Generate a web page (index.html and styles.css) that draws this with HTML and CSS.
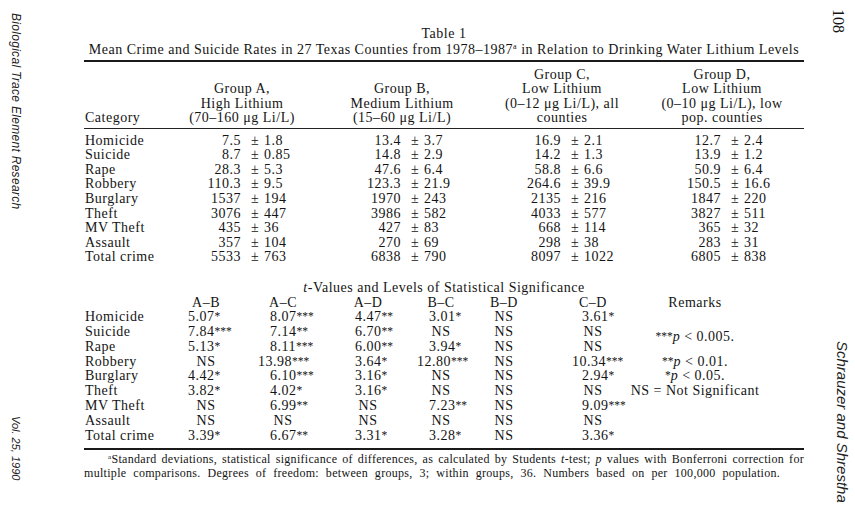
FILE: index.html
```html
<!DOCTYPE html>
<html lang="en">
<head>
<meta charset="utf-8">
<title>Table 1</title>
<link rel="stylesheet" href="styles.css">
</head>
<body>
<div class="page">
  <aside class="gutter-left">
    <div class="runhead">Biological Trace Element Research</div>
    <div class="vol">Vol. 25, 1990</div>
  </aside>

  <main class="main">
    <div class="tnum">Table 1</div>
    <div class="ttitle">Mean Crime and Suicide Rates in 27 Texas Counties from 1978–1987<sup class="fn">a</sup> in Relation to Drinking Water Lithium Levels</div>

    <div class="t1 t1-head">
      <div class="cat">Category</div>
      <div class="grp">Group A,<br>High Lithium<br>(70–160 μg Li/L)</div>
      <div class="grp">Group B,<br>Medium Lithium<br>(15–60 μg Li/L)</div>
      <div class="grp">Group C,<br>Low Lithium<br>(0–12 μg Li/L), all<br>counties</div>
      <div class="grp">Group D,<br>Low Lithium<br>(0–10 μg Li/L), low<br>pop. counties</div>
    </div>

    <div class="t1 t1-body">
      <div class="cat">Homicide</div>
      <div class="val"><span class="num">7.5</span><span class="pm">±</span><span class="sd">1.8</span></div>
      <div class="val"><span class="num">13.4</span><span class="pm">±</span><span class="sd">3.7</span></div>
      <div class="val"><span class="num">16.9</span><span class="pm">±</span><span class="sd">2.1</span></div>
      <div class="val"><span class="num">12.7</span><span class="pm">±</span><span class="sd">2.4</span></div>

      <div class="cat">Suicide</div>
      <div class="val"><span class="num">8.7</span><span class="pm">±</span><span class="sd">0.85</span></div>
      <div class="val"><span class="num">14.8</span><span class="pm">±</span><span class="sd">2.9</span></div>
      <div class="val"><span class="num">14.2</span><span class="pm">±</span><span class="sd">1.3</span></div>
      <div class="val"><span class="num">13.9</span><span class="pm">±</span><span class="sd">1.2</span></div>

      <div class="cat">Rape</div>
      <div class="val"><span class="num">28.3</span><span class="pm">±</span><span class="sd">5.3</span></div>
      <div class="val"><span class="num">47.6</span><span class="pm">±</span><span class="sd">6.4</span></div>
      <div class="val"><span class="num">58.8</span><span class="pm">±</span><span class="sd">6.6</span></div>
      <div class="val"><span class="num">50.9</span><span class="pm">±</span><span class="sd">6.4</span></div>

      <div class="cat">Robbery</div>
      <div class="val"><span class="num">110.3</span><span class="pm">±</span><span class="sd">9.5</span></div>
      <div class="val"><span class="num">123.3</span><span class="pm">±</span><span class="sd">21.9</span></div>
      <div class="val"><span class="num">264.6</span><span class="pm">±</span><span class="sd">39.9</span></div>
      <div class="val"><span class="num">150.5</span><span class="pm">±</span><span class="sd">16.6</span></div>

      <div class="cat">Burglary</div>
      <div class="val"><span class="num">1537</span><span class="pm">±</span><span class="sd">194</span></div>
      <div class="val"><span class="num">1970</span><span class="pm">±</span><span class="sd">243</span></div>
      <div class="val"><span class="num">2135</span><span class="pm">±</span><span class="sd">216</span></div>
      <div class="val"><span class="num">1847</span><span class="pm">±</span><span class="sd">220</span></div>

      <div class="cat">Theft</div>
      <div class="val"><span class="num">3076</span><span class="pm">±</span><span class="sd">447</span></div>
      <div class="val"><span class="num">3986</span><span class="pm">±</span><span class="sd">582</span></div>
      <div class="val"><span class="num">4033</span><span class="pm">±</span><span class="sd">577</span></div>
      <div class="val"><span class="num">3827</span><span class="pm">±</span><span class="sd">511</span></div>

      <div class="cat">MV Theft</div>
      <div class="val"><span class="num">435</span><span class="pm">±</span><span class="sd">36</span></div>
      <div class="val"><span class="num">427</span><span class="pm">±</span><span class="sd">83</span></div>
      <div class="val"><span class="num">668</span><span class="pm">±</span><span class="sd">114</span></div>
      <div class="val"><span class="num">365</span><span class="pm">±</span><span class="sd">32</span></div>

      <div class="cat">Assault</div>
      <div class="val"><span class="num">357</span><span class="pm">±</span><span class="sd">104</span></div>
      <div class="val"><span class="num">270</span><span class="pm">±</span><span class="sd">69</span></div>
      <div class="val"><span class="num">298</span><span class="pm">±</span><span class="sd">38</span></div>
      <div class="val"><span class="num">283</span><span class="pm">±</span><span class="sd">31</span></div>

      <div class="cat">Total crime</div>
      <div class="val"><span class="num">5533</span><span class="pm">±</span><span class="sd">763</span></div>
      <div class="val"><span class="num">6838</span><span class="pm">±</span><span class="sd">790</span></div>
      <div class="val"><span class="num">8097</span><span class="pm">±</span><span class="sd">1022</span></div>
      <div class="val"><span class="num">6805</span><span class="pm">±</span><span class="sd">838</span></div>
    </div>

    <div class="tcap"><i>t</i>-Values and Levels of Statistical Significance</div>

    <div class="tv">
      <div class="ab h">A–B</div><div class="ac h">A–C</div><div class="ad h">A–D</div><div class="bc h">B–C</div><div class="bd h">B–D</div><div class="cd h">C–D</div><div class="rm">Remarks</div>

      <div class="k">Homicide</div><div class="ab v">5.07<span class="st">*</span></div><div class="ac v">8.07<span class="st">***</span></div><div class="ad v">4.47<span class="st">**</span></div><div class="bc v">3.01<span class="st">*</span></div><div class="bd ns">NS</div><div class="cd v">3.61<span class="st">*</span></div>

      <div class="k">Suicide</div><div class="ab v">7.84<span class="st">***</span></div><div class="ac v">7.14<span class="st">**</span></div><div class="ad v">6.70<span class="st">**</span></div><div class="bc ns">NS</div><div class="bd ns">NS</div><div class="cd ns">NS</div><div class="rm drop"><span class="st">***</span><i>p</i> &lt; 0.005.</div>

      <div class="k">Rape</div><div class="ab v">5.13<span class="st">*</span></div><div class="ac v">8.11<span class="st">***</span></div><div class="ad v">6.00<span class="st">**</span></div><div class="bc v">3.94<span class="st">*</span></div><div class="bd ns">NS</div><div class="cd ns">NS</div>

      <div class="k">Robbery</div><div class="ab ns">NS</div><div class="ac v w">13.98<span class="st">***</span></div><div class="ad v">3.64<span class="st">*</span></div><div class="bc v w">12.80<span class="st">***</span></div><div class="bd ns">NS</div><div class="cd v w">10.34<span class="st">***</span></div><div class="rm"><span class="st">**</span><i>p</i> &lt; 0.01.</div>

      <div class="k">Burglary</div><div class="ab v">4.42<span class="st">*</span></div><div class="ac v">6.10<span class="st">***</span></div><div class="ad v">3.16<span class="st">*</span></div><div class="bc ns">NS</div><div class="bd ns">NS</div><div class="cd v">2.94<span class="st">*</span></div><div class="rm"><span class="st">*</span><i>p</i> &lt; 0.05.</div>

      <div class="k">Theft</div><div class="ab v">3.82<span class="st">*</span></div><div class="ac v">4.02<span class="st">*</span></div><div class="ad v">3.16<span class="st">*</span></div><div class="bc ns">NS</div><div class="bd ns">NS</div><div class="cd ns">NS</div><div class="rm">NS = Not Significant</div>

      <div class="k">MV Theft</div><div class="ab ns">NS</div><div class="ac v">6.99<span class="st">**</span></div><div class="ad ns">NS</div><div class="bc v">7.23<span class="st">**</span></div><div class="bd ns">NS</div><div class="cd v">9.09<span class="st">***</span></div>

      <div class="k">Assault</div><div class="ab ns">NS</div><div class="ac ns">NS</div><div class="ad ns">NS</div><div class="bc ns">NS</div><div class="bd ns">NS</div><div class="cd ns">NS</div>

      <div class="k">Total crime</div><div class="ab v">3.39<span class="st">*</span></div><div class="ac v">6.67<span class="st">**</span></div><div class="ad v">3.31<span class="st">*</span></div><div class="bc v">3.28<span class="st">*</span></div><div class="bd ns">NS</div><div class="cd v">3.36<span class="st">*</span></div>
    </div>

    <div class="foot">
      <div class="l1"><sup class="fna">a</sup>Standard deviations, statistical significance of differences, as calculated by Students <i>t</i>-test; <i>p</i> values with Bonferroni correction for</div>
      <div class="l2">multiple comparisons. Degrees of freedom: between groups, 3; within groups, 36. Numbers based on per 100,000 population.</div>
    </div>
  </main>

  <aside class="gutter-right">
    <div class="folio">108</div>
    <div class="authors">Schrauzer and Shrestha</div>
  </aside>
</div>
</body>
</html>
```

FILE: styles.css
```css
* { box-sizing: border-box; }

body {
  margin: 0;
  background: #ffffff;
  color: #141414;
  font-family: "Liberation Serif", "Times New Roman", serif;
}

.page {
  display: flex;
  width: 855px;
  height: 505px;
  overflow: hidden;
}

/* ---------- side gutters ---------- */
.gutter-left {
  width: 84px;
  flex: none;
  display: flex;
  flex-direction: column;
  justify-content: space-between;
  align-items: flex-start;
  padding: 13px 0 25px 9px;
}

.runhead,
.vol,
.authors {
  writing-mode: vertical-rl;
  font-family: "Liberation Sans", Arial, sans-serif;
  font-style: italic;
  color: #222;
}

.runhead { font-size: 12px; line-height: 14px; letter-spacing: 0.3px; }
.vol { font-size: 11px; line-height: 14px; }

.gutter-right {
  flex: 1;
  display: flex;
  flex-direction: column;
  justify-content: space-between;
  align-items: flex-start;
  padding: 9px 0 2px 25px;
}

.folio {
  writing-mode: vertical-rl;
  font-size: 16px;
  line-height: 18px;
}

.authors {
  font-size: 15px;
  line-height: 17px;
  margin-left: 5px;
}

/* ---------- main table area ---------- */
.main {
  width: 720px;
  flex: none;
  padding-top: 26px;
  font-size: 14px;
  letter-spacing: 0.5px;
}

.tnum,
.ttitle {
  text-align: center;
  line-height: 16px;
}

.ttitle {
  padding-bottom: 2px;
  border-bottom: 2px solid #1a1a1a;
}

.fn {
  font-size: 8px;
  line-height: 0;
  vertical-align: 5px;
}

.t1 {
  display: grid;
  grid-template-columns: 78px repeat(4, 160px);
}

.t1-head {
  line-height: 14.5px;
  padding: 5.7px 0 2.3px;
  border-bottom: 1px solid #222;
}

.t1-head > div { align-self: end; }

.cat { padding-left: 1px; }

.grp { text-align: center; }

.t1-body {
  line-height: 14.6px;
  padding-top: 4.7px;
}

.val {
  display: grid;
  grid-template-columns: 84px 18px auto;
}

.num { text-align: right; padding-right: 5px; }
.pm { text-align: center; }

/* ---------- t-values ---------- */
.tcap {
  text-align: center;
  line-height: 14.8px;
  margin-top: 15.7px;
}

.tv {
  display: grid;
  grid-template-columns: 96px 52px 22px 58px 28px 56px 16px 58px 6px 56px 34px 54px 150px;
  line-height: 14.8px;
  padding-bottom: 4.4px;
  border-bottom: 2px solid #1a1a1a;
}

.tv .k { grid-column: 1; padding-left: 1px; }
.tv .ab { grid-column: 2; }
.tv .ac { grid-column: 4; }
.tv .ad { grid-column: 6; }
.tv .bc { grid-column: 8; }
.tv .bd { grid-column: 10; }
.tv .cd { grid-column: 12; }
.tv .rm { grid-column: 13; text-align: center; }

.tv .h,
.tv .ns { text-align: center; }

.tv .ab.v { padding-left: 8px; }
.tv .ac.v { padding-left: 16px; }
.tv .ad.v { padding-left: 15px; }
.tv .bc.v { padding-left: 17px; }
.tv .cd.v { padding-left: 16px; }

.tv .ac.w { padding-left: 4px; }
.tv .bc.w { padding-left: 5px; }
.tv .cd.w { padding-left: 6px; }

.st {
  font-size: 11.5px;
  line-height: 0;
  letter-spacing: 0;
  vertical-align: 1px;
}

.tv .drop {
  margin-top: 5px;
  margin-bottom: -5px;
}

/* ---------- footnote ---------- */
.foot {
  font-size: 12px;
  line-height: 14px;
  padding-top: 2px;
  letter-spacing: 0.3px;
}

.foot .l1 {
  text-indent: 24px;
  text-align: justify;
  text-align-last: justify;
}

.foot .l2 {
  word-spacing: 3.6px;
}

.fna {
  font-size: 7px;
  line-height: 0;
  vertical-align: 4px;
}
```
